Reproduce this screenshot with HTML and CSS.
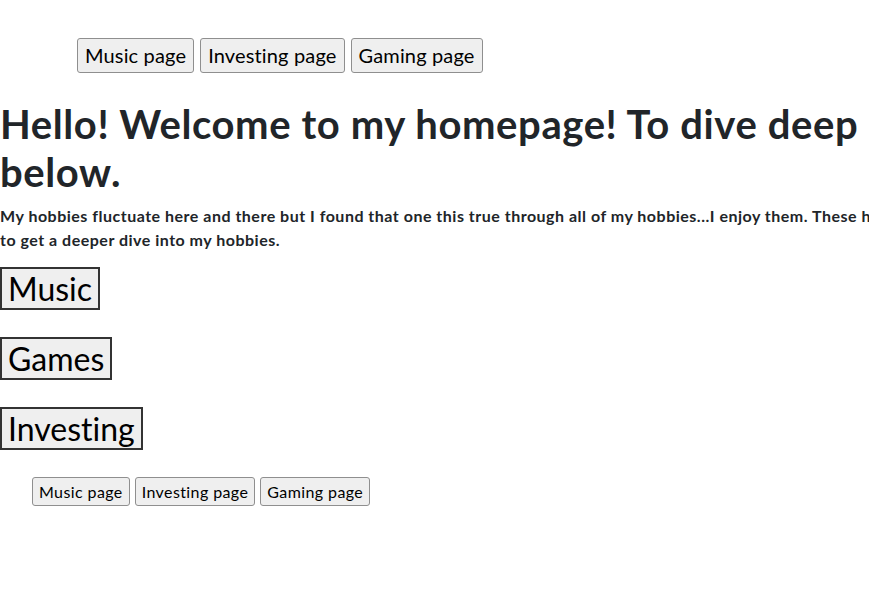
FILE: index.html
```html
<!DOCTYPE html>
<html>
<head>
<meta charset="utf-8">
<title>Homepage</title>
<link rel="stylesheet" href="styles.css">
</head>
<body>
<div class="page">
  <nav class="topnav">
    <button class="btn btn-lg">Music page</button>
    <button class="btn btn-lg">Investing page</button>
    <button class="btn btn-lg">Gaming page</button>
  </nav>
  <h1 class="title">Hello! Welcome to my homepage! To dive deep into my hobbies, click on the buttons<br>below.</h1>
  <p class="intro">My hobbies fluctuate here and there but I found that one this true through all of my hobbies...I enjoy them. These hobbies are listed below. Click on the buttons<br>to get a deeper dive into my hobbies.</p>
  <div class="hobbies">
    <button class="big">Music</button>
    <button class="big">Games</button>
    <button class="big">Investing</button>
  </div>
  <nav class="bottomnav">
    <button class="btn btn-sm">Music page</button>
    <button class="btn btn-sm">Investing page</button>
    <button class="btn btn-sm">Gaming page</button>
  </nav>
</div>
</body>
</html>
```
FILE: styles.css
```css
html, body {
  margin: 0;
  padding: 0;
  overflow: hidden;
  background: #fff;
}
body {
  font-family: Lato, "Liberation Sans", sans-serif;
  font-variant-ligatures: none;
  color: #212529;
}
.page {
  width: 1500px;
}
.topnav {
  display: flex;
  gap: 6px;
  padding: 38px 0 0 77px;
}
.btn {
  font-family: Lato, "Liberation Sans", sans-serif;
  font-variant-ligatures: none;
  background: #efefef;
  color: #000;
  border: 1px solid #8f8f8f;
  border-radius: 3px;
  margin: 0;
}
.btn-lg {
  font-size: 20px;
  letter-spacing: 0.15px;
  line-height: 26px;
  padding: 3px 7px 4px;
}
.title {
  margin: 27px 0 0 0;
  font-size: 40px;
  letter-spacing: 0.6px;
  line-height: 48px;
  font-weight: 700;
  white-space: nowrap;
}
.intro {
  margin: 8px 0 0 0;
  font-size: 16px;
  font-weight: 700;
  letter-spacing: 0.5px;
  line-height: 24px;
  white-space: nowrap;
}
.hobbies {
  display: flex;
  flex-direction: column;
  align-items: flex-start;
  gap: 27px;
  margin-top: 15px;
}
.big {
  font-family: Lato, "Liberation Sans", sans-serif;
  font-variant-ligatures: none;
  font-size: 32px;
  line-height: 35px;
  padding: 2px 6px;
  background: #efefef;
  color: #000;
  border: 2px solid #333;
  border-radius: 0;
  margin: 0;
}
.bottomnav {
  display: flex;
  gap: 5px;
  padding: 27px 0 0 32px;
}
.btn-sm {
  font-size: 16px;
  letter-spacing: 0.4px;
  line-height: 21px;
  padding: 3px 6px;
}
```
